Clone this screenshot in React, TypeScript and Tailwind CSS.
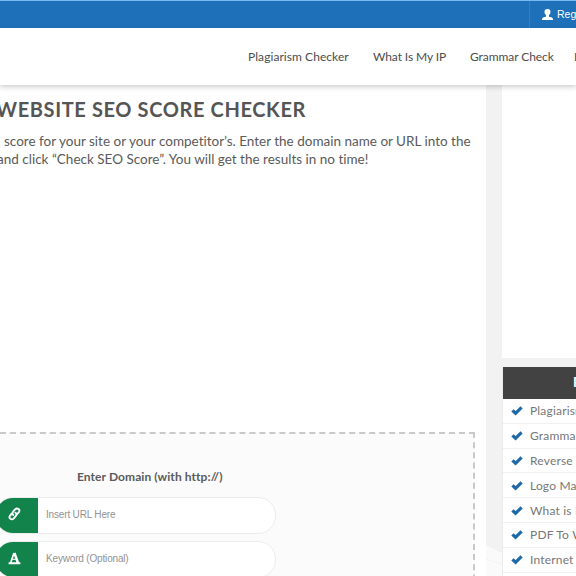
const tools = [
  "Plagiarism Checker",
  "Grammar Check",
  "Reverse Image Search",
  "Logo Maker",
  "What is My IP",
  "PDF To Word",
  "Internet Speed Test",
  "Word Counter",
];

function UserIcon() {
  return (
    <svg className="h-[11px] w-[11px] shrink-0" viewBox="0 0 11 11" fill="white">
      <path d="M5.500 0C3.300 0 2.400 1.200 2.500 2.900 2.600 4.500 3.200 5.400 4 6v1.500C3.700 8.200 0 8.200 0 10V11h11V10C11 8.200 7.300 8.200 7 7.500V6c.8-.6 1.400-1.500 1.500-3.100C8.600 1.200 7.700 0 5.500 0Z" />
    </svg>
  );
}

function CheckIcon() {
  return (
    <svg className="h-[10px] w-[12px] shrink-0" viewBox="0 0 12 10" fill="#1f69a8">
      <path d="M9.500.3 4.700 5.100 2.500 3.300.3 5.500 4.600 9.500 11.700 2.500Z" />
    </svg>
  );
}

function LinkIcon() {
  return (
    <svg className="h-[14px] w-[13px]" viewBox="0 0 13 14" fill="none" stroke="white" strokeWidth="1.900" strokeLinecap="round">
      <path d="M5.300 8.100C4.100 6.900 4.100 5.700 5.100 4.600L7.300 2.200C9.300.3 12.600 2.500 10.900 5.100L9.300 7" />
      <path d="M7.500 5.700C8.700 6.900 8.700 8.100 7.700 9.200L5.600 11.600C3.500 13.500.3 11.200 2 8.700L3.500 7" />
    </svg>
  );
}

function LetterIcon() {
  return (
    <svg className="h-[13px] w-[13px]" viewBox="0 0 13 13" fill="none" stroke="white">
      <path d="M6 1 2.600 11" strokeWidth="1.700" />
      <path d="M6.400 1 10 11" strokeWidth="2.500" />
      <path d="M4 7.300h5" strokeWidth="1" />
      <path d="M.6 11.200h11.800" strokeWidth="1.900" />
    </svg>
  );
}

function Field({ icon, label }: { icon: React.ReactNode; label: string }) {
  return (
    <div className="flex h-[37px] w-[281px] overflow-hidden rounded-[18px] border border-[#ececec] bg-white">
      <div className="-my-px -ml-px flex w-[43px] shrink-0 items-center justify-center bg-[#11834b] pr-[4px] pb-[3px]">{icon}</div>
      <div className="pt-[10px] pl-[8px] font-['Liberation_Sans',sans-serif] text-[10px] leading-[13px] tracking-[-0.017em] whitespace-nowrap text-[#929292]">{label}</div>
    </div>
  );
}

export default function App() {
  return (
    <div className="flex h-[576px] w-[576px] flex-col overflow-hidden bg-[#f2f2f2] font-['Lato',sans-serif] text-[#5a5a5a] [font-variant-ligatures:none]">
      <div className="flex h-7 shrink-0 justify-end border-t border-[#78b9ef] bg-[#1e70b8]">
        <div className="flex w-[47px] items-center gap-[4px] border-l border-[#347fc0] pl-[12px] font-['Liberation_Sans',sans-serif] text-[10.500px] text-white">
          <UserIcon />
          <span>Register</span>
        </div>
      </div>
      <header className="relative z-10 flex h-[57px] shrink-0 bg-white pt-[20px] pl-[248px] shadow-[0_2px_5px_rgba(0,0,0,0.2)]">
        <nav className="flex text-[12px] leading-[18px] whitespace-nowrap text-[#4c4c4c]">
          <a className="w-[125px] shrink-0 tracking-[0.005em]">Plagiarism Checker</a>
          <a className="w-[97px] shrink-0 tracking-[-0.008em]">What Is My IP</a>
          <a className="w-[104px] shrink-0 tracking-[-0.006em]">Grammar Check</a>
          <a className="shrink-0">Login</a>
        </nav>
      </header>
      <div className="flex min-h-0 flex-1">
        <main className="flex w-[486px] shrink-0 flex-col overflow-hidden bg-white pt-[11px]">
          <h1 className="-ml-[4px] text-[20px] leading-[26px] font-bold tracking-[0.031em] whitespace-nowrap text-[#555]">WEBSITE SEO SCORE CHECKER</h1>
          <div className="mt-[10px] h-[300px] shrink-0 text-[13.500px] leading-[18px] whitespace-nowrap">
            <p className="ml-[4px]">score for your site or your competitor’s. Enter the domain name or URL into the</p>
            <p className="-ml-[3px]">and click “Check SEO Score”. You will get the results in no time!</p>
          </div>
          <form className="-ml-[20px] h-[240px] w-[495px] shrink-0 border-2 border-dashed border-[#c9c9c9] bg-[#fbfbfb] pt-[34px] pl-[13px]">
            <label className="ml-[82px] block h-[29px] text-[12px] leading-[18px] font-bold tracking-[0.007em] whitespace-nowrap">Enter Domain (with http://)</label>
            <div className="flex flex-col gap-[7px]">
              <Field icon={<LinkIcon />} label="Insert URL Here" />
              <Field icon={<LetterIcon />} label="Keyword (Optional)" />
            </div>
          </form>
        </main>
        <div className="flex w-4 shrink-0 flex-col justify-end">
          <svg className="h-[31px] w-4" viewBox="0 0 16 31">
            <path d="M0 0 16 8V31H0Z" fill="#fafafa" />
            <path d="M0 14 16 19" stroke="#f3f3f3" />
          </svg>
        </div>
        <aside className="flex w-[74px] shrink-0 flex-col overflow-hidden">
          <div className="mb-[9px] h-[273px] shrink-0 bg-white" />
          <section className="w-[220px] flex-1 border-l border-[#eaeaea] bg-white">
            <h2 className="h-8 bg-[#424242] pl-[70px] text-[13px] leading-[31px] font-bold text-white">Popular Tools</h2>
            <ul>
              {tools.map((tool) => (
                <li key={tool} className="flex h-[24.800px] items-center gap-[7px] border-b border-[#efefef] pt-px pl-[8px] text-[12px] leading-[18px] tracking-[0.015em] whitespace-nowrap text-[#777]">
                  <CheckIcon />
                  {tool}
                </li>
              ))}
            </ul>
          </section>
        </aside>
      </div>
    </div>
  );
}
